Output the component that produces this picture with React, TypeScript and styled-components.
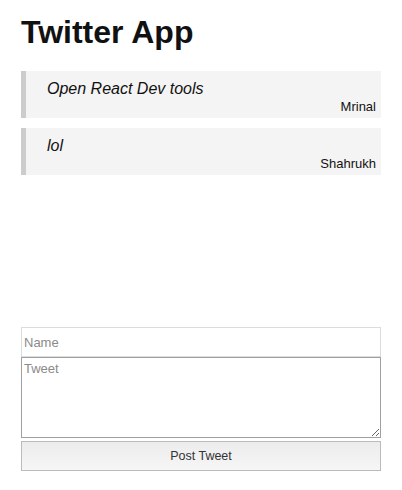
import styled, { createGlobalStyle } from 'styled-components';

const tweets = [
  { text: 'Open React Dev tools', author: 'Mrinal' },
  { text: 'lol', author: 'Shahrukh' },
];

function App() {
  return (
    <>
      <GlobalStyle />
      <StPage>
        <StTitle>Twitter App</StTitle>
        <StTweetList>
          {tweets.map((tweet) => (
            <StTweet key={tweet.author}>
              <p>{tweet.text}</p>
              <cite>{tweet.author}</cite>
            </StTweet>
          ))}
        </StTweetList>
        <StForm onSubmit={(e) => e.preventDefault()}>
          <StNameInput placeholder="Name" />
          <StTweetInput placeholder="Tweet" />
          <StPostButton type="submit">Post Tweet</StPostButton>
        </StForm>
      </StPage>
    </>
  );
}

export default App;

const GlobalStyle = createGlobalStyle`
  * {
    box-sizing: border-box;
  }

  body {
    margin: 0;
    background: #fff;
    color: #111;
    font-family: 'Liberation Sans', Arial, sans-serif;
  }
`;

const StPage = styled.main`
  display: flex;
  flex-direction: column;

  height: 490px;
  padding: 0 21px 19px 21px;
`;

const StTitle = styled.h1`
  margin: 13px 0 0 0;

  font-size: 32px;
  font-weight: 700;
  line-height: 38px;
`;

const StTweetList = styled.section`
  display: flex;
  flex-direction: column;
  gap: 10px;

  margin-top: 20px;
`;

const StTweet = styled.blockquote`
  display: flex;
  flex-direction: column;

  height: 47px;
  margin: 0;
  padding: 8px 5px 0 21px;

  border-left: 5px solid #cccccc;
  background-color: #f4f4f4;

  & > p {
    margin: 0;

    font-size: 16px;
    font-style: italic;
    line-height: 20px;
  }

  & > cite {
    align-self: flex-end;

    font-size: 13px;
    font-style: normal;
    line-height: 15px;
  }
`;

const StForm = styled.form`
  display: flex;
  flex-direction: column;

  margin-top: auto;
`;

const StNameInput = styled.input`
  width: 100%;
  height: 30px;
  padding: 0 2px;

  border: 1px solid #dcdcdc;
  color: #111;
  font-family: inherit;
  font-size: 13px;

  &::placeholder {
    color: #8a8a8a;
  }
`;

const StTweetInput = styled.textarea`
  display: block;
  width: 100%;
  height: 81px;
  padding: 3px 2px;

  border: 1px solid #a0a0a0;
  color: #111;
  font-family: inherit;
  font-size: 13px;
  resize: both;

  &::placeholder {
    color: #8a8a8a;
  }
`;

const StPostButton = styled.button`
  height: 30px;
  margin-top: 3px;

  border: 1px solid #bbbbbb;
  border-radius: 0;
  background: linear-gradient(#ececec, #f6f6f6);
  color: #333;
  font-family: inherit;
  font-size: 12.5px;
`;
